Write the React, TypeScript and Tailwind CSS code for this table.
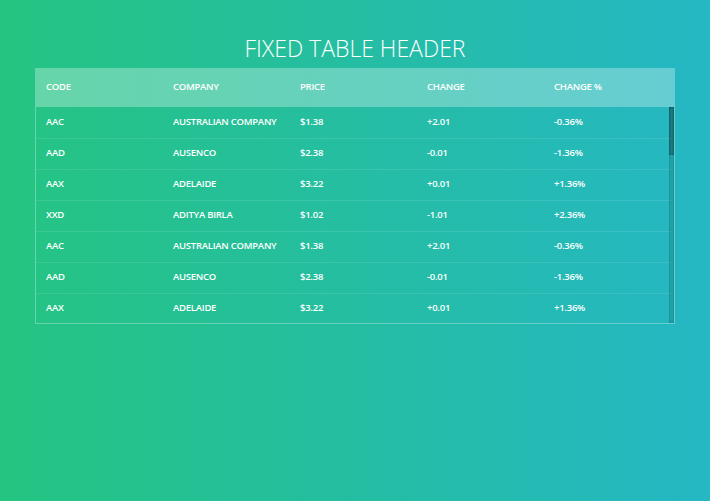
import React from "react";

const base = [
  ["AAC", "AUSTRALIAN COMPANY", "$1.38", "+2.01", "-0.36%"],
  ["AAD", "AUSENCO", "$2.38", "-0.01", "-1.36%"],
  ["AAX", "ADELAIDE", "$3.22", "+0.01", "+1.36%"],
  ["XXD", "ADITYA BIRLA", "$1.02", "-1.01", "+2.36%"],
];

const rows: string[][] = [];
for (let i = 0; i < 31; i++) rows.push(base[i % 4]);

const heads = ["CODE", "COMPANY", "PRICE", "CHANGE", "CHANGE %"];

export default function App() {
  return (
    <div
      className="w-[710px] h-[501px] overflow-hidden bg-[linear-gradient(to_right,#25c481,#25b7c4)] text-white"
      style={{ fontFamily: "'Open Sans', 'Noto Sans', sans-serif" }}
    >
      <div className="px-[35px] pt-[33px]">
        <h1 className="text-center text-[23px] leading-[30px] font-light mb-[5px]">
          FIXED TABLE HEADER
        </h1>
        <div className="bg-white/30 pr-[5px] h-[38px]">
          <table className="w-full table-fixed border-collapse">
            <thead>
              <tr>
                {heads.map((h) => (
                  <th
                    key={h}
                    className="text-left font-semibold text-[9.5px] tracking-[-0.25px] h-[38px] px-[11px] align-middle"
                  >
                    {h}
                  </th>
                ))}
              </tr>
            </thead>
          </table>
        </div>
        <div className="relative h-[218px] border border-white/30">
          <div className="h-full overflow-y-auto overflow-x-hidden pr-[3px] [scrollbar-width:none] [&::-webkit-scrollbar]:hidden">
            <table className="w-full table-fixed border-collapse">
              <tbody>
                {rows.map((r, i) => (
                  <tr key={i} className="border-b border-white/10">
                    {r.map((c, j) => (
                      <td
                        key={j}
                        className="text-left font-semibold text-[9.5px] tracking-[-0.25px] h-[31px] px-[10px] align-middle whitespace-nowrap"
                      >
                        {c}
                      </td>
                    ))}
                  </tr>
                ))}
              </tbody>
            </table>
          </div>
          <div className="absolute right-0 top-0 bottom-0 w-[5px] bg-black/10 shadow-[inset_0_0_3px_rgba(0,0,0,0.25)]">
            <div className="h-[48px] bg-black/25 shadow-[inset_0_0_2px_rgba(0,0,0,0.3)]" />
          </div>
        </div>
      </div>
    </div>
  );
}
